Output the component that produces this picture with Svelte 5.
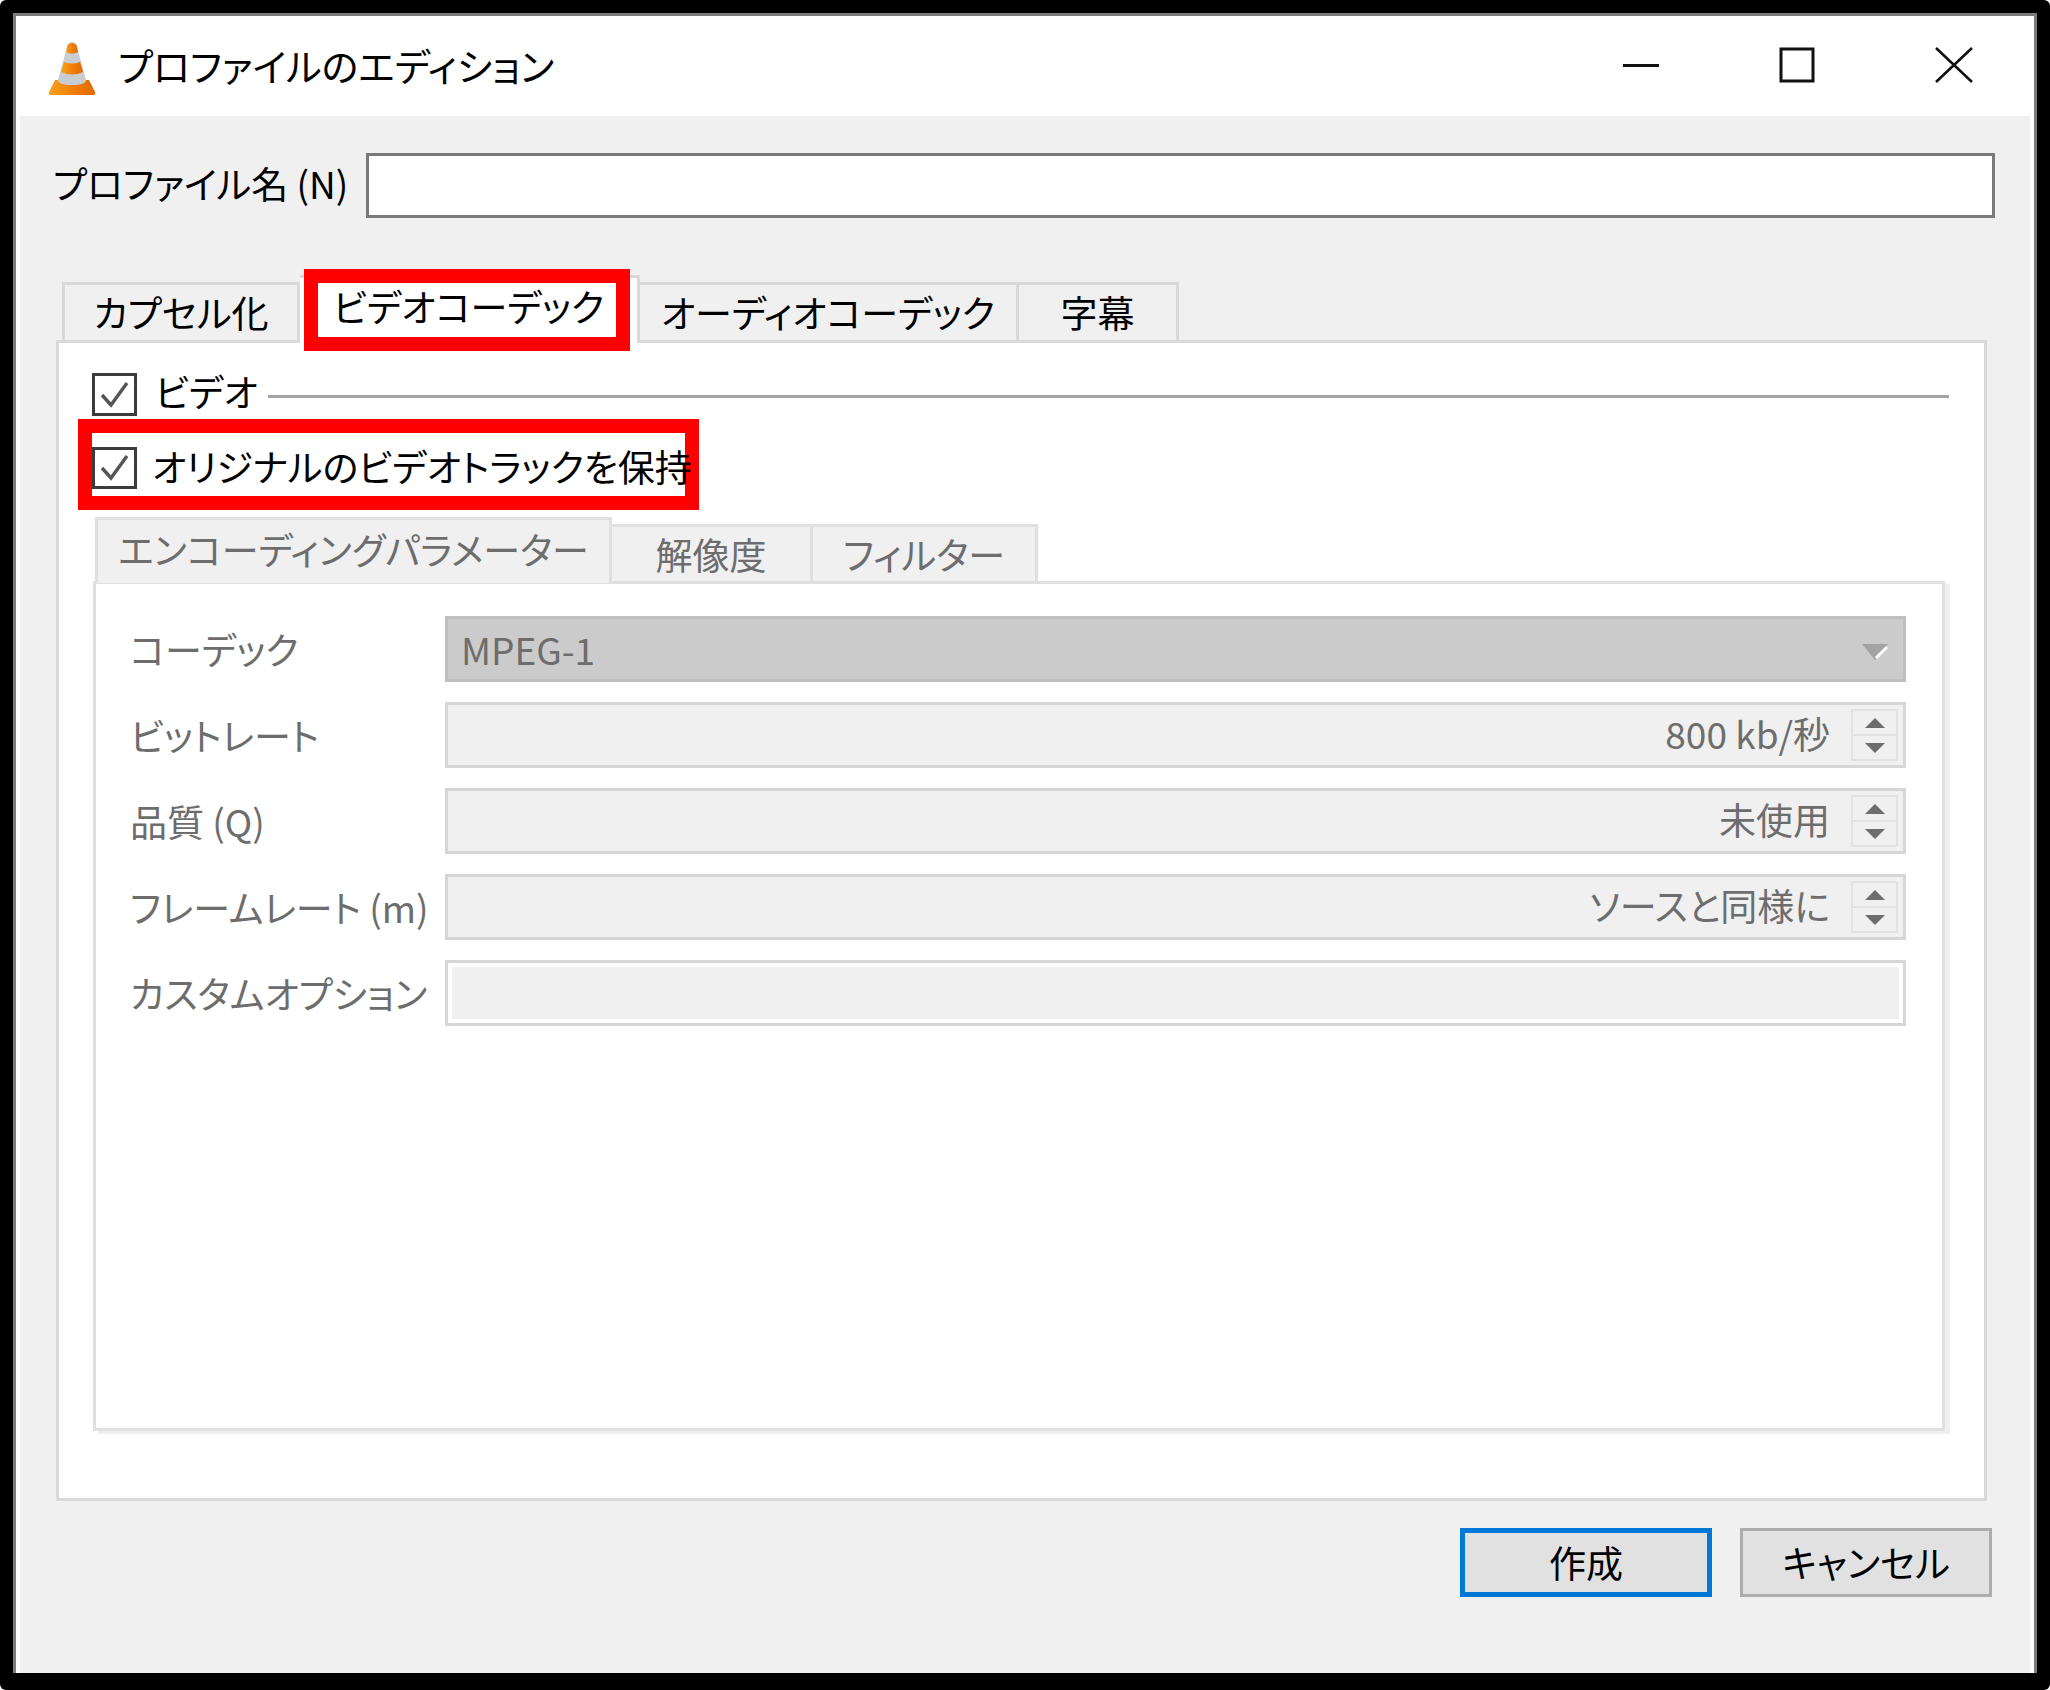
<script>
	const outerTabs = [
		{ label: 'カプセル化', w: 238 },
		{ label: 'ビデオコーデック', w: 340, active: true },
		{ label: 'オーディオコーデック', w: 379 },
		{ label: '字幕', w: 160 }
	];
	const innerTabs = [
		{ label: 'エンコーディングパラメーター', w: 517, active: true },
		{ label: '解像度', w: 201 },
		{ label: 'フィルター', w: 225 }
	];
	const spins = [
		{ label: 'ビットレート', value: '800 kb/秒' },
		{ label: '品質 (Q)', value: '未使用' },
		{ label: 'フレームレート (m)', value: 'ソースと同様に' }
	];
</script>

<div class="frame">
	<div class="window">
		<header class="titlebar">
			<svg class="cone" width="48" height="53" viewBox="0 0 48 53">
				<defs>
					<linearGradient id="orange" x1="0" y1="0" x2="1" y2="0">
						<stop offset="0" stop-color="#f9a11b" />
						<stop offset="0.55" stop-color="#f07c06" />
						<stop offset="1" stop-color="#e06a00" />
					</linearGradient>
				</defs>
				<path d="M7 38 L1 50 Q0 53 3 53 L45 53 Q48 53 47 50 L41 38 Z" fill="url(#orange)" />
				<path d="M19 5 Q20 0 24 0 Q28 0 29 5 L38 38 Q38 43 24 43 Q10 43 10 38 Z" fill="#c9ccd0" />
				<path d="M19.5 3 Q24 -1 28.5 3 L30 10 Q24 13 18 10 Z" fill="url(#orange)" />
				<path d="M16 20 Q24 23 32 20 L35 30 Q24 35 13 30 Z" fill="url(#orange)" />
			</svg>
			<span class="title">プロファイルのエディション</span>
			<div class="controls">
				<svg width="36" height="36" viewBox="0 0 36 36"><path d="M0 18.5 H36" stroke="#111" stroke-width="3" /></svg>
				<svg width="36" height="36" viewBox="0 0 36 36"><rect x="2" y="2" width="32" height="32" fill="none" stroke="#111" stroke-width="3" /></svg>
				<svg width="38" height="36" viewBox="0 0 38 36"><path d="M1 1 L37 35 M37 1 L1 35" stroke="#111" stroke-width="2.6" /></svg>
			</div>
		</header>

		<main class="body">
			<div class="name-row">
				<label class="name-label" for="profile">プロファイル名 (N)</label>
				<input id="profile" class="name-input" type="text" />
			</div>

			<div class="tabs">
				{#each outerTabs as tab}
					<div class="tab" class:active={tab.active} style="width: {tab.w}px">
						<span>{tab.label}</span>
						{#if tab.active}<i class="mark tab-mark"></i>{/if}
					</div>
				{/each}
			</div>

			<section class="pane">
				<div class="check-row">
					<span class="check">
						<svg width="39" height="37" viewBox="0 0 39 37"><path d="M7 19 L16 29 L32 7" fill="none" stroke="#555" stroke-width="3.4" /></svg>
					</span>
					<span class="check-label">ビデオ</span>
					<span class="rule"></span>
				</div>
				<div class="check-row second">
					<span class="check">
						<svg width="39" height="35" viewBox="0 0 39 35"><path d="M7 18 L16 28 L32 6" fill="none" stroke="#555" stroke-width="3.4" /></svg>
					</span>
					<span class="check-label keep">オリジナルのビデオトラックを保持</span>
					<i class="mark keep-mark"></i>
				</div>

				<div class="inner-tabs">
					{#each innerTabs as tab}
						<div class="inner-tab" class:active={tab.active} style="width: {tab.w}px">{tab.label}</div>
					{/each}
				</div>
				<div class="inner-pane">
					<div class="form">
						<span class="field-label">コーデック</span>
						<div class="combo">
							<span>MPEG-1</span>
							<svg width="26" height="16" viewBox="0 0 26 16">
								<path d="M0 0 H26 L13 16 Z" fill="#a3a3a3" />
								<path d="M14 14 L25 3" stroke="#fff" stroke-width="3" />
							</svg>
						</div>
						{#each spins as spin}
							<span class="field-label">{spin.label}</span>
							<div class="spin">
								<span class="spin-value">{spin.value}</span>
								<div class="spin-buttons">
									<span class="spin-btn"><svg width="20" height="10" viewBox="0 0 20 10"><path d="M10 0 L20 10 H0 Z" fill="#6d6d6d" /></svg></span>
									<span class="spin-btn"><svg width="20" height="10" viewBox="0 0 20 10"><path d="M0 0 H20 L10 10 Z" fill="#6d6d6d" /></svg></span>
								</div>
							</div>
						{/each}
						<span class="field-label">カスタムオプション</span>
						<div class="custom"></div>
					</div>
				</div>
			</section>

			<footer class="footer">
				<button class="btn primary">作成</button>
				<button class="btn">キャンセル</button>
			</footer>
		</main>
	</div>
</div>

<style>
	:global(body) {
		margin: 0;
		background: #fff;
	}

	.frame {
		width: 2050px;
		height: 1690px;
		box-sizing: border-box;
		padding: 13px 13px 17px 13px;
		background: #000;
		border-radius: 6px;
		display: flex;
		font-family: "Noto Sans CJK JP", sans-serif;
		font-feature-settings: "palt";
		font-size: 37px;
		color: #000;
	}

	.window {
		flex: 1;
		display: flex;
		flex-direction: column;
		background: #fff;
		border: 3px solid #7c7c7c;
		border-bottom: 0;
		padding: 0 4px;
		min-width: 0;
	}

	.titlebar {
		height: 100px;
		display: flex;
		align-items: center;
		padding-left: 28px;
	}

	.cone {
		margin-top: 5px;
		filter: blur(0.5px);
	}

	.title {
		margin-left: 22px;
		font-size: 38px;
		line-height: 1;
		margin-top: -2px;
	}

	.controls {
		margin-left: auto;
		margin-right: 57px;
		display: flex;
		align-items: center;
		gap: 120px;
		margin-top: -3px;
	}

	.body {
		flex: 1;
		background: #f0f0f0;
		display: flex;
		flex-direction: column;
	}

	.name-row {
		margin: 37px 35px 0 33px;
		display: flex;
		align-items: center;
	}

	.name-label {
		width: 313px;
		flex: none;
		white-space: nowrap;
		line-height: 1;
		margin-top: -4px;
	}

	.name-input {
		flex: 1;
		height: 65px;
		box-sizing: border-box;
		background: #fff;
		border: 3px solid #7a7a7a;
		border-radius: 0;
		margin: 0;
		min-width: 0;
	}

	.tabs {
		margin: 57px 0 0 42px;
		height: 65px;
		display: flex;
		align-items: flex-end;
		position: relative;
		z-index: 1;
	}

	.tab {
		position: relative;
		height: 58px;
		box-sizing: border-box;
		background: #f0f0f0;
		border: 3px solid #d9d9d9;
		border-bottom: 0;
		border-left-width: 0;
		display: flex;
		align-items: center;
		justify-content: center;
		white-space: nowrap;
		line-height: 1;
	}

	.tab:first-child {
		border-left-width: 3px;
	}

	.tab span {
		position: relative;
		z-index: 1;
	}

	.tab.active {
		height: 68px;
		margin-bottom: -3px;
		background: #fff;
		padding-bottom: 8px;
	}

	.mark {
		position: absolute;
		border: 14px solid #f00;
		box-sizing: border-box;
		display: block;
		pointer-events: none;
	}

	.tab-mark {
		left: 4px;
		top: -9px;
		width: 326px;
		height: 82px;
	}

	.pane {
		margin-left: 36px;
		width: 1931px;
		height: 1161px;
		box-sizing: border-box;
		background: #fff;
		border: 3px solid #d9d9d9;
		padding: 30px 35px 0 33px;
	}

	.check-row {
		display: flex;
		align-items: center;
		height: 43px;
		line-height: 1;
	}

	.check-row.second {
		position: relative;
		margin-top: 31px;
		height: 42px;
	}

	.check {
		width: 45px;
		height: 100%;
		box-sizing: border-box;
		border: 3px solid #3c3c3c;
		flex: none;
		display: flex;
		background: #fff;
	}

	.check-label {
		margin-left: 18px;
		white-space: nowrap;
		margin-top: -6px;
	}

	.check-label.keep {
		margin-left: 15px;
		position: relative;
		z-index: 1;
		margin-top: -4px;
	}

	.rule {
		flex: 1;
		height: 3px;
		background: #a3a3a3;
		margin: 3px 0 0 10px;
	}

	.keep-mark {
		left: -14px;
		top: -28px;
		width: 621px;
		height: 91px;
	}

	.inner-tabs {
		margin: 28px 0 0 3px;
		height: 64px;
		display: flex;
		align-items: flex-end;
		position: relative;
		z-index: 1;
		color: #6d6d6d;
		line-height: 1;
	}

	.inner-tab {
		height: 57px;
		box-sizing: border-box;
		background: #f0f0f0;
		border: 3px solid #e0e0e0;
		border-left-width: 0;
		border-bottom: 0;
		display: flex;
		align-items: center;
		justify-content: center;
		white-space: nowrap;
	}

	.inner-tab.active {
		height: 66px;
		margin-bottom: -2px;
		border-left-width: 3px;
		padding-bottom: 4px;
	}

	.inner-pane {
		margin-left: 1px;
		width: 1852px;
		height: 850px;
		box-sizing: border-box;
		background: #fff;
		border: 3px solid #e0e0e0;
		box-shadow: 5px 3px 0 #f0f0f0;
		padding: 32px 0 0 34px;
	}

	.form {
		display: grid;
		grid-template-columns: 315px 1461px;
		grid-auto-rows: 66px;
		row-gap: 20px;
		color: #6d6d6d;
		line-height: 1;
	}

	.field-label {
		align-self: center;
		white-space: nowrap;
	}

	.combo {
		background: #cbcbcb;
		border: 3px solid #bfbfbf;
		box-sizing: border-box;
		display: flex;
		align-items: center;
		justify-content: space-between;
		padding: 0 15px 0 13px;
	}

	.combo svg {
		margin-top: 5px;
	}

	.spin {
		background: #f0f0f0;
		border: 3px solid #d6d6d6;
		box-sizing: border-box;
		display: flex;
		align-items: center;
		justify-content: flex-end;
		padding-right: 5px;
	}

	.spin-value {
		margin-right: 21px;
		white-space: nowrap;
		margin-top: -4px;
	}

	.spin-buttons {
		width: 47px;
		height: 52px;
		box-sizing: border-box;
		border: 2px solid #e2e2e2;
		display: flex;
		flex-direction: column;
	}

	.spin-btn {
		flex: 1;
		display: flex;
		align-items: center;
		justify-content: center;
	}

	.spin-btn + .spin-btn {
		border-top: 2px solid #e2e2e2;
	}

	.custom {
		background: #f0f0f0;
		border: 3px solid #d6d6d6;
		box-shadow: inset 0 0 0 4px #fff;
		box-sizing: border-box;
	}

	.footer {
		margin: 27px 38px 0 0;
		display: flex;
		justify-content: flex-end;
		gap: 28px;
	}

	.btn {
		width: 252px;
		height: 69px;
		box-sizing: border-box;
		background: #e1e1e1;
		border: 3px solid #adadad;
		border-radius: 0;
		font: inherit;
		font-feature-settings: "palt";
		line-height: 1;
		color: #000;
		padding: 0;
	}

	.btn.primary {
		border: 5px solid #0078d7;
	}
</style>
